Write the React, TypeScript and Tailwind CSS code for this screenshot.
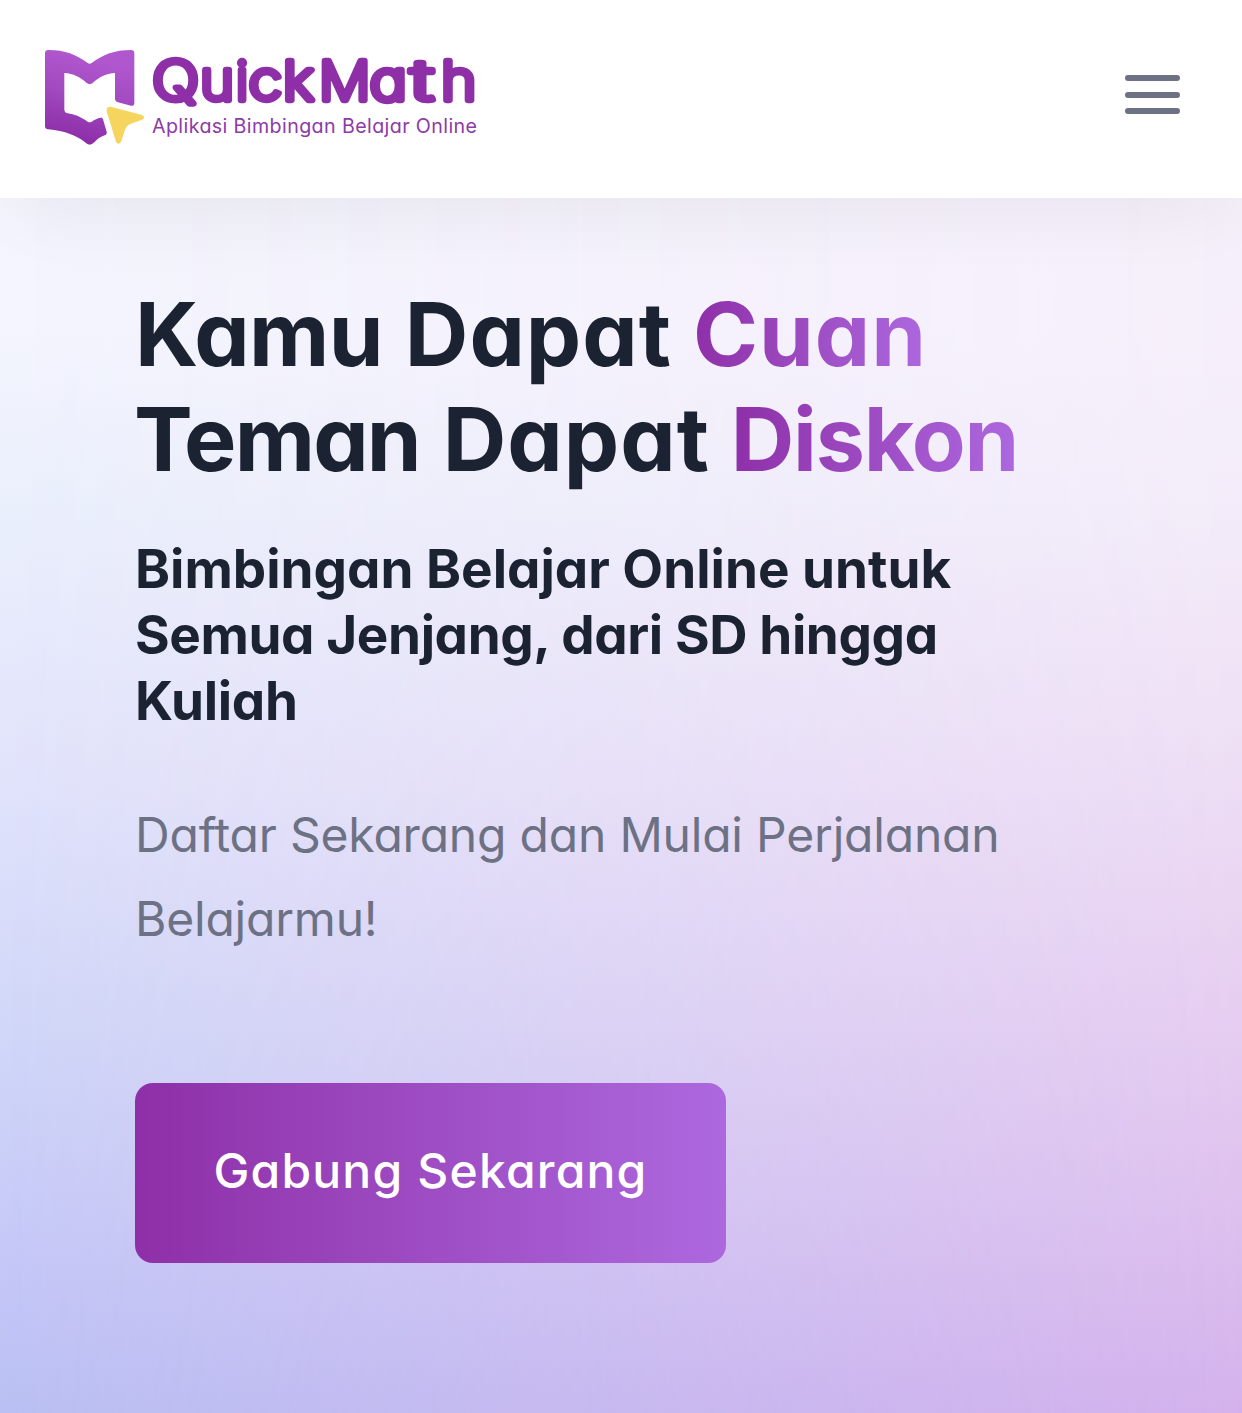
function Logo() {
  return (
    <svg
      viewBox="45 54 1305 300"
      className="h-[100px] w-[435px] font-['Inter',sans-serif] [font-feature-settings:'cv11']"
      role="img"
      aria-label="QuickMath"
    >
      <defs>
        <linearGradient id="book" x1="0.6" y1="0.1" x2="0.4" y2="1">
          <stop offset="0" stopColor="#b057cf" />
          <stop offset="0.45" stopColor="#a149bf" />
          <stop offset="1" stopColor="#8b2ca6" />
        </linearGradient>
      </defs>
      <path
        fill="url(#book)"
        d="M55 60 C105 60 139 74 173 99 Q179 103 185 99 C219 74 253 60 303 60 Q313 60 313 70 V218 Q313 229 303 227 L264 217 Q255 214 255 206 V129 C228 131 208 141 188 159 Q179 166 170 159 C150 141 130 131 103 129 V238 Q103 248 112 250 C138 254 154 262 173 275 Q179 279 185 275 C194 268 202 265 212 263 Q217 262 219 268 L230 305 Q232 313 224 316 C209 321 201 328 193 337 Q179 351 165 337 C141 317 106 303 54 298 Q45 297 45 289 V70 Q45 60 55 60 Z"
      />
      <path
        fill="#f5d55e"
        d="M242 230 L334 254 Q350 261 336 269 L303 281 Q289 286 285 299 L273 336 Q266 347 258 336 L230 244 Q228 229 242 230 Z"
      />
      <text
        y="210"
        fontSize="162"
        fontWeight="200"
        fill="#8e2fa8"
        stroke="#8e2fa8"
        strokeWidth="19"
        strokeLinejoin="round"
      >
        <tspan x="367" textLength="140" lengthAdjust="spacingAndGlyphs">Q</tspan>
        <tspan x="511" textLength="101" lengthAdjust="spacingAndGlyphs">u</tspan>
        <tspan x="618">i</tspan>
        <tspan x="656" textLength="99" lengthAdjust="spacingAndGlyphs">c</tspan>
        <tspan x="759" textLength="92" lengthAdjust="spacingAndGlyphs">k</tspan>
        <tspan x="867" textLength="154" lengthAdjust="spacingAndGlyphs">M</tspan>
        <tspan x="1019" textLength="111" lengthAdjust="spacingAndGlyphs">a</tspan>
        <tspan x="1143" textLength="66" lengthAdjust="spacingAndGlyphs">t</tspan>
        <tspan x="1234" textLength="105" lengthAdjust="spacingAndGlyphs">h</tspan>
      </text>
      <text x="366" y="310" fontSize="59" fill="#8e3aa8" textLength="975">
        Aplikasi Bimbingan Belajar Online
      </text>
    </svg>
  );
}

const accent = "bg-linear-to-r from-[#8e2fa8] to-[#ad68df] bg-clip-text text-transparent";

export default function App() {
  return (
    <div className="flex h-[1413px] w-full flex-col overflow-hidden font-['Inter',sans-serif] [font-feature-settings:'cv11']">
      <header className="relative z-10 flex h-[198px] shrink-0 items-start justify-between bg-white pt-12 pr-[62.5px] pl-[45px] shadow-[0_30px_75px_-15px_rgba(0,0,0,0.05)]">
        <Logo />
        <button aria-label="Menu" className="mt-[27px] flex w-[55px] flex-col gap-[10.5px]">
          <span className="h-1.5 w-full rounded-full bg-[#6d7184]" />
          <span className="h-1.5 w-full rounded-full bg-[#6d7184]" />
          <span className="h-1.5 w-full rounded-full bg-[#6d7184]" />
        </button>
      </header>
      <main className="relative isolate flex grow flex-col items-start bg-[linear-gradient(to_bottom,#f3f4fc_0%,#f4f5fe_10%,#ebf0fc_24%,#e1e3fb_48%,#cfd6f8_70%,#c5c8f7_87%,#bac0f3_100%)] pl-[135px] whitespace-nowrap">
        <div className="absolute inset-0 -z-10 bg-[linear-gradient(to_bottom,#f5effa_0%,#f6effb_12%,#f3ebf9_26%,#eedff5_45%,#e7cff1_65%,#ddc0ee_84%,#d4b1ec_100%)] [mask-image:linear-gradient(to_right,transparent,black)]" />
        <h1 className="mt-[84px] text-[88px] leading-[105px] font-bold text-[#1b2232]">
          <span className="block">
            <span className="tracking-[-0.6px]">Kamu</span>{" "}
            <span className="ml-px tracking-[1px]">Dapat</span>{" "}
            <span className={`tracking-[1px] ${accent}`}>Cuan</span>
          </span>
          <span className="-ml-px block">
            <span className="tracking-[-1.8px]">Teman</span>{" "}
            <span className="ml-0.5 tracking-[1px]">Dapat</span>{" "}
            <span className={`tracking-[-1.2px] ${accent}`}>Diskon</span>
          </span>
        </h1>
        <h2 className="mt-[44px] text-[53px] leading-[66px] font-bold text-[#1b2232]">
          <span className="block">Bimbingan Belajar Online untuk</span>
          <span className="block tracking-[-0.39px]">Semua Jenjang, dari SD hingga</span>
          <span className="block tracking-[-0.3px]">Kuliah</span>
        </h2>
        <p className="mt-[59px] text-[48px] leading-[84px] tracking-[-0.2px] text-[#6d7184]">
          <span className="block">Daftar Sekarang dan Mulai Perjalanan</span>
          <span className="block">Belajarmu!</span>
        </p>
        <button className="mt-[122px] h-[180px] w-[591px] rounded-[18px] bg-linear-to-r from-[#8e2fa8] to-[#ad68df] pb-[4px] text-[48px] font-medium tracking-[1.2px] text-white">
          Gabung Sekarang
        </button>
      </main>
    </div>
  );
}
